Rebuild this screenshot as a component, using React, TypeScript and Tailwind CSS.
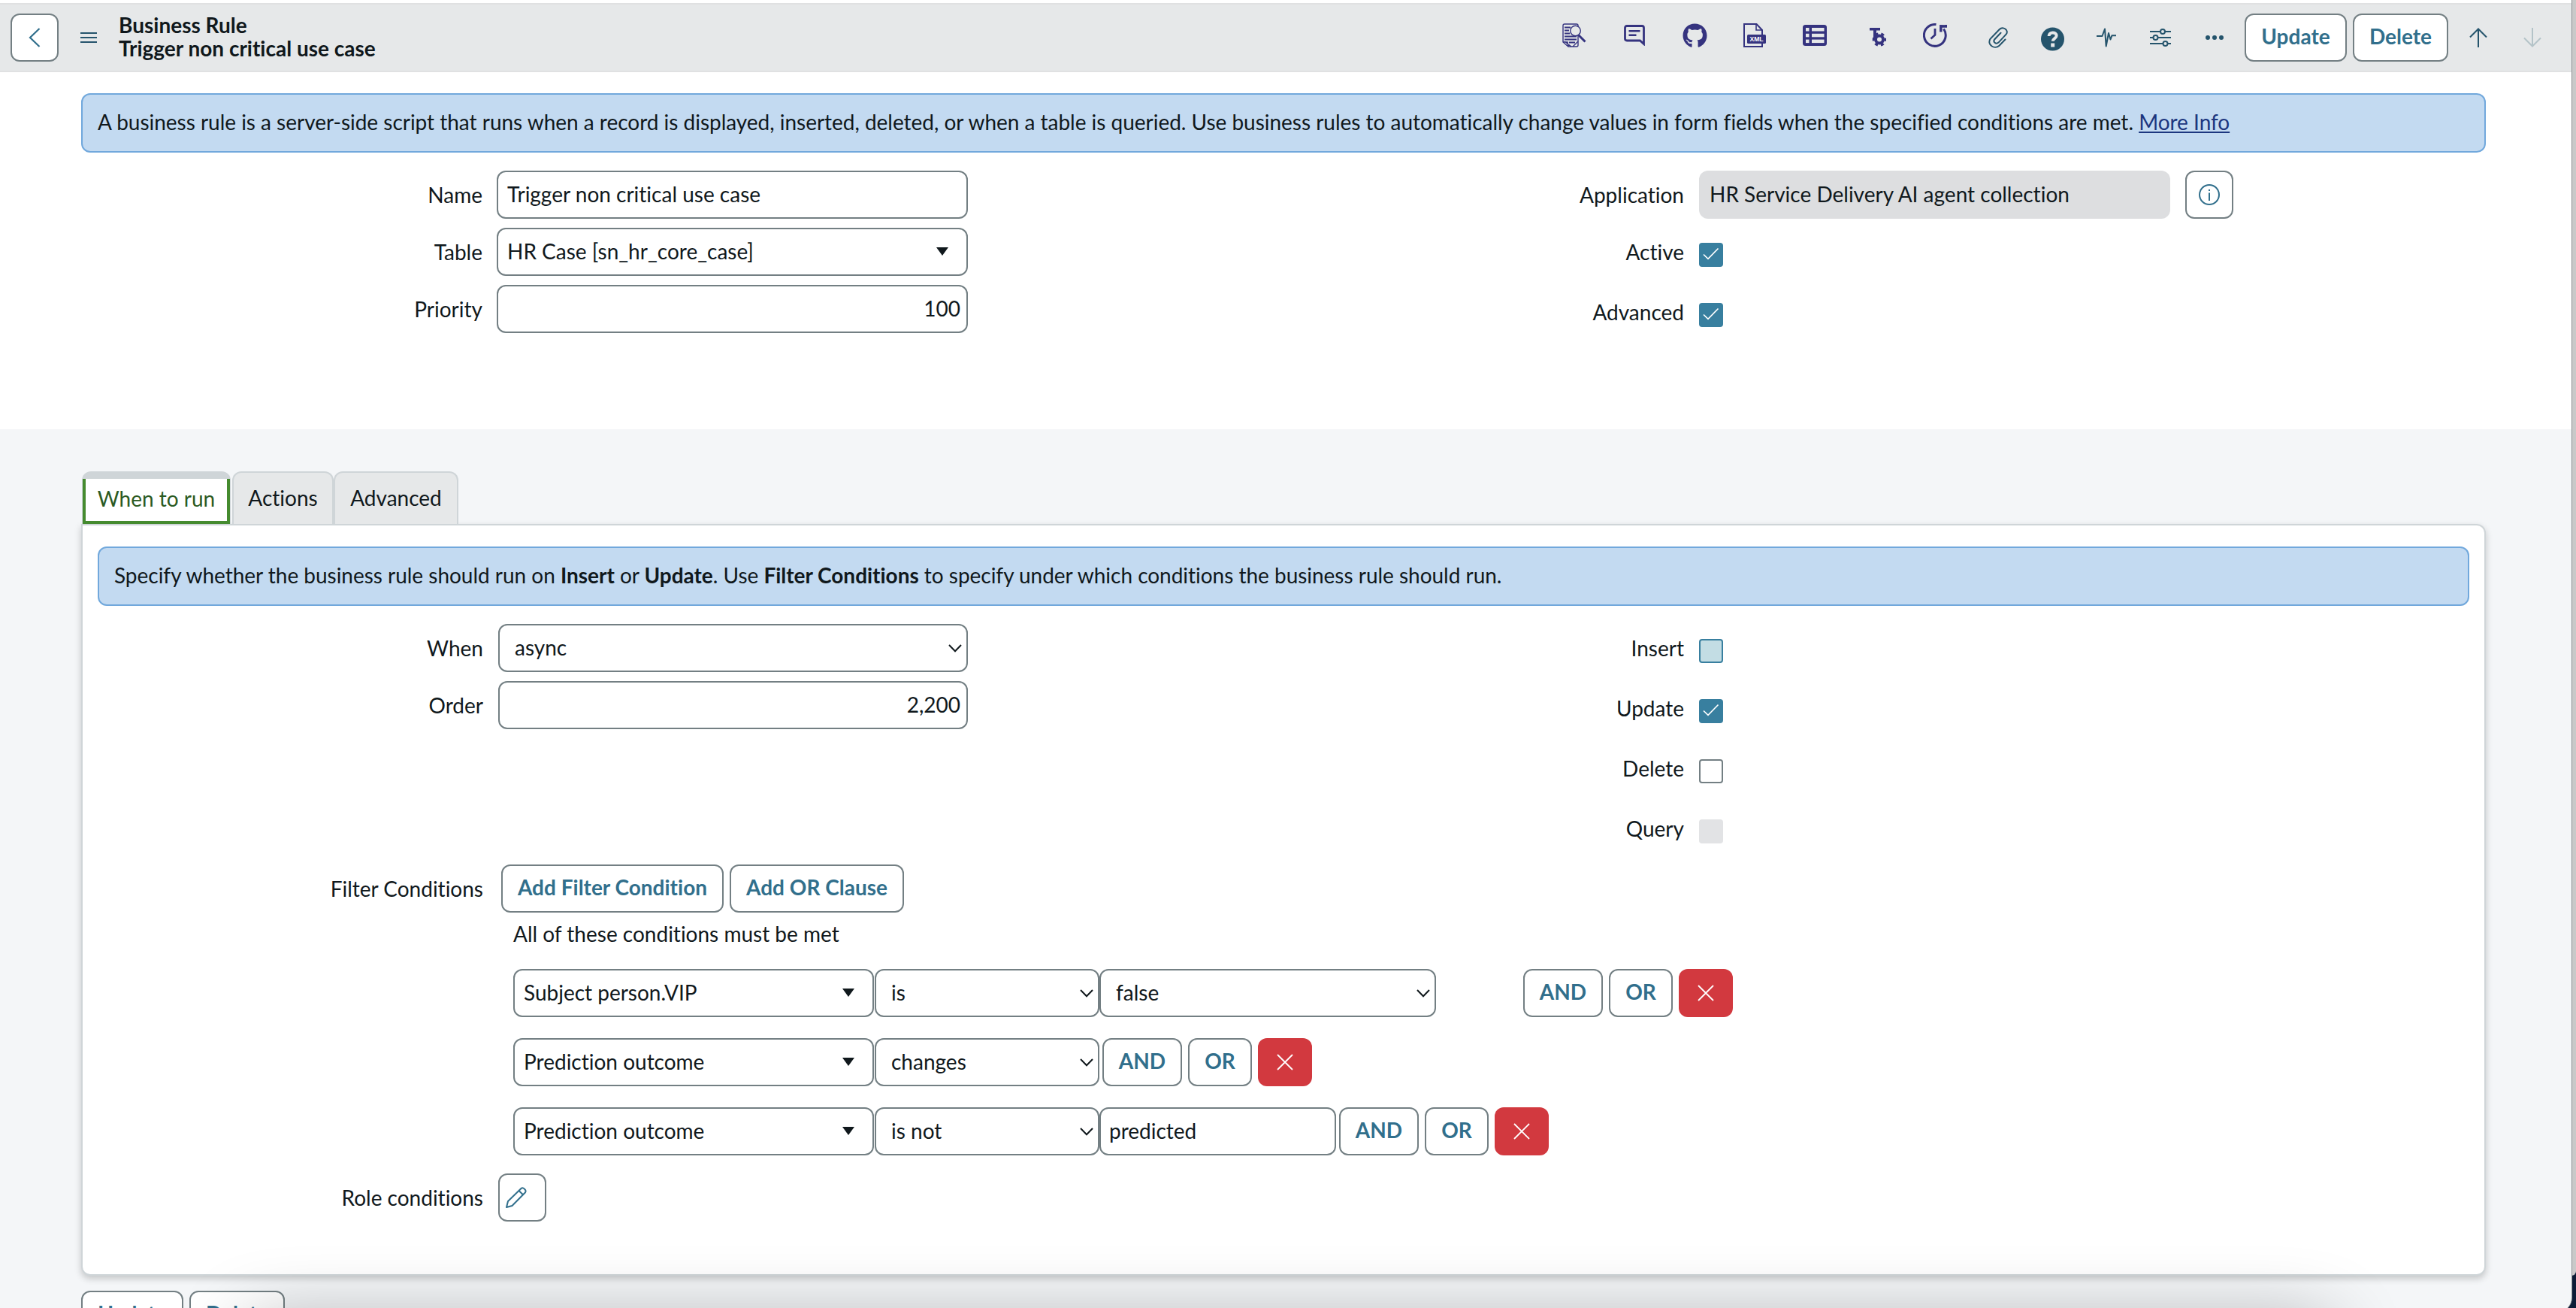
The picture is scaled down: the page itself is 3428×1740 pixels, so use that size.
import React from "react";
import { FaGithub } from "react-icons/fa";

const INK = "text-[#10181c]";

function Check({ state }: { state: "on" | "hover" | "off" | "disabled" }) {
  if (state === "on")
    return (
      <span className="mt-2 flex h-8 w-8 shrink-0 items-center justify-center rounded-[4px] bg-[#387f9f]">
        <svg width="32" height="32" viewBox="0 0 32 32" fill="none" stroke="#fff" strokeWidth="1.7">
          <path d="M6 15.5 L12 21.3 L25.5 7.5" />
        </svg>
      </span>
    );
  if (state === "hover")
    return <span className="mt-2 h-8 w-8 shrink-0 rounded-[4px] border-2 border-[#387f9f] bg-[#c3dde4]" />;
  if (state === "off")
    return <span className="mt-2 h-8 w-8 shrink-0 rounded-[4px] border-2 border-[#737f83] bg-white" />;
  return <span className="mt-2 h-8 w-8 shrink-0 rounded-[4px] bg-[#e2e3e5]" />;
}

function CheckRow({ label, state }: { label: string; state: "on" | "hover" | "off" | "disabled" }) {
  return (
    <div className="flex h-16 items-center gap-5">
      <span className="w-[400px] text-right">{label}</span>
      <Check state={state} />
    </div>
  );
}

function Btn({ children, className = "" }: { children: React.ReactNode; className?: string }) {
  return (
    <button
      className={
        "flex h-16 shrink-0 items-center justify-center whitespace-nowrap rounded-[12px] border-2 border-[#737f83] bg-white pb-[4px] font-bold text-[#316f8c] " +
        className
      }
    >
      {children}
    </button>
  );
}

function Triangle() {
  return (
    <svg width="16" height="11" viewBox="0 0 16 11" className="mt-px shrink-0 fill-[#10181c]">
      <path d="M0 0 H16 L8 11 Z" />
    </svg>
  );
}

function Chevron() {
  return (
    <svg width="18" height="11" viewBox="0 0 18 11" fill="none" stroke="#10181c" strokeWidth="2" className="mt-[3px] shrink-0">
      <path d="M1 1 L9 9.2 L17 1" />
    </svg>
  );
}

const BOX = "flex h-16 shrink-0 items-center rounded-[12px] border-2 border-[#737f83] bg-white pb-[3px]";

function Picker({ text, className }: { text: string; className: string }) {
  return (
    <div className={BOX + " justify-between pl-3 " + className}>
      <span>{text}</span>
      <Triangle />
    </div>
  );
}

function Select({ text, className }: { text: string; className: string }) {
  return (
    <div className={BOX + " justify-between pl-5 pr-[6px] " + className}>
      <span>{text}</span>
      <Chevron />
    </div>
  );
}

function Field({ label, labelClass, children }: { label: string; labelClass: string; children: React.ReactNode }) {
  return (
    <div className="flex items-center">
      <span className={"shrink-0 text-right " + labelClass}>{label}</span>
      {children}
    </div>
  );
}

function Clauses({ className }: { className: string }) {
  return (
    <div className={"flex gap-2 " + className}>
      <Btn className="w-[106px]">AND</Btn>
      <Btn className="w-[85px]">OR</Btn>
      <button className="flex h-16 w-[72px] items-center justify-center rounded-[12px] bg-[#d2393f]">
        <svg width="22" height="22" viewBox="0 0 22 22" fill="none" stroke="#fff" strokeWidth="1.8">
          <path d="M1 1 L21 21 M21 1 L1 21" />
        </svg>
      </button>
    </div>
  );
}

function InfoCircle() {
  return (
    <svg width="28" height="28" viewBox="0 0 28 28" fill="none" stroke="#316f8c" strokeWidth="2">
      <circle cx="14" cy="14" r="13" />
      <path d="M14 11.5 V22" />
      <path d="M14 7 V9" />
    </svg>
  );
}

function Header() {
  return (
    <header className="flex h-[92px] w-full items-center border-y-2 border-[#e0e1e2] bg-[#e6e8e9] pl-[14px]">
      <Btn className="w-16">
        <svg width="16" height="26" viewBox="0 0 16 26" fill="none" stroke="#316f8c" strokeWidth="2.2" className="mt-[4px]">
          <path d="M14.5 1 L2 13 L14.5 25" />
        </svg>
      </Btn>
      <svg width="22" height="16" viewBox="0 0 22 16" className="ml-[29px] fill-[#25546c]">
        <rect width="22" height="2" y="1" />
        <rect width="22" height="2" y="7" />
        <rect width="22" height="2" y="13" />
      </svg>
      <div className="ml-[29px] -mt-[3px] w-[1921px] font-bold leading-[31px]">
        <div>Business Rule</div>
        <div>Trigger non critical use case</div>
      </div>

      {/* developer shortcuts */}
      <div className="-mt-[6px] flex items-center text-[#35337f]">
        <svg width="32" height="32" viewBox="0 0 32 32" fill="none" stroke="currentColor" strokeWidth="1.4">
          <path d="M21 4 V3 Q21 1 19 1 H3 Q1 1 1 3 V25 L8 31 H19 Q21 31 21 29 V17" />
          <path d="M1 25 L7 25 L8 31 M3 24 L12 31 M21 24 L14 31" />
          <path d="M3 5.5 H11 M3 9.5 H9 M3 13.5 H10 M3 17.5 H19 M3 21.5 H19 M9 25.5 H17" strokeWidth="1.8" />
          <circle cx="17.5" cy="10" r="6.8" />
          <path d="M21.5 15.5 L30.5 24.5" strokeWidth="3" />
        </svg>
        <svg width="28" height="28" viewBox="0 0 28 28" fill="none" stroke="currentColor" strokeWidth="2.8" className="ml-[50px]">
          <path d="M4 1.5 H24 Q26.5 1.5 26.5 4 V25.5 L21.5 21 H4 Q1.5 21 1.5 18.5 V4 Q1.5 1.5 4 1.5 Z" />
          <path d="M6.5 8.3 H21.5 M6.5 13.8 H16.5" strokeWidth="2.4" />
        </svg>
        <FaGithub size={33} className="-mr-px ml-[50px]" />
        <svg width="30" height="32" viewBox="0 0 30 32" fill="none" stroke="currentColor" strokeWidth="2" className="ml-[49px]">
          <path d="M25 15 V9 L17.5 1 H1 V31 H25 V27" />
          <path d="M17 1 V9 H25" strokeWidth="1.6" />
          <rect x="5" y="15" width="25" height="12" rx="1.5" fill="currentColor" stroke="none" />
          <text x="17.5" y="24.2" textAnchor="middle" fontSize="8.6" fontWeight="700" fill="#fff" stroke="none" fontFamily="Liberation Sans, sans-serif">
            XML
          </text>
        </svg>
        <svg width="32" height="28" viewBox="0 0 32 28" className="ml-[49px]">
          <rect width="32" height="28" rx="3.5" fill="currentColor" />
          <g fill="#e6e8e9">
            <rect x="4" y="4" width="4.5" height="4.5" />
            <rect x="12" y="4" width="16.5" height="4.5" />
            <rect x="4" y="11.8" width="4.5" height="4.5" />
            <rect x="12" y="11.8" width="16.5" height="4.5" />
            <rect x="4" y="19.6" width="4.5" height="4.5" />
            <rect x="12" y="19.6" width="16.5" height="4.5" />
          </g>
        </svg>
        <svg width="22" height="26" viewBox="0 0 22 26" className="ml-[57px] mt-[3px]">
          <path d="M0 1 H14 V4.5 H9 V15 H5 V4.5 H0 Z" fill="currentColor" />
          <circle cx="13" cy="16.5" r="5" fill="none" stroke="currentColor" strokeWidth="4" />
          <circle cx="13" cy="16.5" r="7.8" fill="none" stroke="currentColor" strokeWidth="3" strokeDasharray="4.1 4.07" strokeDashoffset="2" />
        </svg>
        <svg width="32" height="32" viewBox="0 0 32 32" fill="none" stroke="currentColor" strokeWidth="3" className="ml-[49px]">
          <path d="M17.5 1.6 A14.4 14.4 0 1 0 27.5 7.5" />
          <path d="M31 2 V4 L23.8 3.8 V11.5" strokeWidth="3.4" />
          <path d="M16 7 V15.5 L10.5 20.5" strokeWidth="2.8" />
        </svg>
      </div>

      {/* record tools */}
      <div className="ml-[55px] flex items-center text-[#25546c]">
        <svg width="26" height="28" viewBox="0 0 26 28" fill="none" stroke="currentColor" strokeWidth="2" strokeLinecap="round">
          <path d="M22.5 16.5 L14.5 24.7 C8 30.5 -2 23.5 2.5 15.8 L14.8 3 C19.5 -1.5 27.5 4 23.8 9.5 L13.5 20.6 C10 23.5 5.5 19.8 8.4 16.2 L16.5 7.8" />
        </svg>
        <svg width="31" height="32" viewBox="0 0 31 32" className="ml-[44px] mt-1">
          <circle cx="15.5" cy="16" r="15.5" fill="currentColor" />
          <path d="M10.6 12 C10.6 6 20.6 6 20.6 11.4 C20.6 15.2 15.8 15 15.8 18.8" fill="none" stroke="#e6e8e9" strokeWidth="4" />
          <rect x="13.2" y="21.5" width="5" height="5" fill="#e6e8e9" />
        </svg>
        <svg width="26" height="26" viewBox="0 0 26 26" fill="none" stroke="currentColor" strokeWidth="2" strokeLinejoin="round" className="ml-[43px]">
          <path d="M0 11 H7.5 L11 1.5 L12.7 24.5 L16 7 L18.5 15.5 L20.5 10.2 H26" />
        </svg>
        <svg width="28" height="24" viewBox="0 0 28 24" fill="none" stroke="currentColor" strokeWidth="2" className="ml-[45px]">
          <path d="M0 4 H14 M20 4 H28 M0 12 H4.5 M10.5 12 H28 M0 20 H17.5 M23.5 20 H28" />
          <circle cx="17" cy="4" r="3" />
          <circle cx="7.5" cy="12" r="3" />
          <circle cx="20.5" cy="20" r="3" />
        </svg>
        <svg width="24" height="6" viewBox="0 0 24 6" className="ml-[46px] fill-[#25546c]">
          <circle cx="3" cy="3" r="3" />
          <circle cx="12" cy="3" r="3" />
          <circle cx="21" cy="3" r="3" />
        </svg>
      </div>

      <Btn className="ml-7 w-[136px]">Update</Btn>
      <Btn className="ml-2 w-[127px]">Delete</Btn>
      <svg width="24" height="26" viewBox="0 0 24 26" fill="none" stroke="#25546c" strokeWidth="2" className="ml-7 shrink-0">
        <path d="M12 26 V1.5 M1 12.5 L12 1.5 L23 12.5" />
      </svg>
      <svg width="24" height="26" viewBox="0 0 24 26" fill="none" stroke="#b4c3c8" strokeWidth="2" className="ml-12 shrink-0">
        <path d="M12 0 V24.5 M1 13.5 L12 24.5 L23 13.5" />
      </svg>
    </header>
  );
}

function InfoBar({ children }: { children: React.ReactNode }) {
  return (
    <div className="flex h-[79px] items-center rounded-[12px] border-2 border-[#71a8dc] bg-[#c3daf1] pb-[3px] pl-5 tracking-[-0.023px]">
      <p>{children}</p>
    </div>
  );
}

function Tabs() {
  return (
    <div className="flex h-[70px]">
      <div className="ml-px flex w-[198px] flex-col overflow-hidden rounded-t-[12px] bg-[#cfd5d8]">
        <div className="mx-px mt-[10px] flex flex-1 items-center justify-center border-4 border-t-0 border-[#458b2f] bg-white text-[#2b5a22]">
          <span className="-mt-[5px]">When to run</span>
        </div>
      </div>
      <div className="ml-[2px] flex w-[135px] items-center justify-center rounded-t-[12px] border-2 border-b-0 border-[#cfd5d8] bg-[#e6e8e9] pb-[2px]">
        Actions
      </div>
      <div className="flex w-[166px] items-center justify-center rounded-t-[12px] border-2 border-b-0 border-[#cfd5d8] bg-[#e6e8e9] pb-[2px]">
        Advanced
      </div>
    </div>
  );
}

export default function App() {
  return (
    <div
      className={
        "relative flex h-[1740px] w-[3428px] overflow-hidden bg-[#0c1c36] font-['Lato',sans-serif] text-[28px] leading-[34px] [font-variant-ligatures:none] " +
        INK
      }
    >
      {/* strip of the window behind */}
      <div className="absolute right-0 top-0 h-[1697px] w-8 rounded-br-[6px] bg-[#c9c9c9]" />

      <main className="relative flex h-[1746px] w-[3423px] shrink-0 flex-col overflow-hidden rounded-br-[20px] border-r border-[#8f9294] bg-[#f4f6f8]">
        <div className="h-[571px] shrink-0 bg-white pt-1">
          <Header />
          <div className="pl-[108px] pr-[114px] pt-7">
            <InfoBar>
              A business rule is a server-side script that runs when a record is displayed, inserted, deleted, or when a
              table is queried. Use business rules to automatically change values in form fields when the specified
              conditions are met. <a className="text-[#1b367f] underline decoration-2 underline-offset-2">More Info</a>
            </InfoBar>
          </div>
          <div className="mt-6 flex">
            <div className="flex w-[1841px] flex-col gap-3">
              <Field label="Name" labelClass="w-[642px] mr-[19px]">
                <div className={BOX + " w-[627px] pl-3"}>Trigger non critical use case</div>
              </Field>
              <Field label="Table" labelClass="w-[642px] mr-[19px]">
                <Picker text="HR Case [sn_hr_core_case]" className="w-[627px] pr-6" />
              </Field>
              <Field label="Priority" labelClass="w-[642px] mr-[19px]">
                <div className={BOX + " w-[627px] justify-end pr-2"}>100</div>
              </Field>
            </div>
            <div className="flex flex-col">
              <div className="flex items-center">
                <span className="mr-5 w-[400px] text-right">Application</span>
                <div className="flex h-16 w-[627px] items-center rounded-[12px] bg-[#dddee0] pb-[3px] pl-[14px]">
                  HR Service Delivery AI agent collection
                </div>
                <Btn className="ml-5 w-16 pt-[4px]">
                  <InfoCircle />
                </Btn>
              </div>
              <div className="mt-3 flex flex-col gap-4">
                <CheckRow label="Active" state="on" />
                <CheckRow label="Advanced" state="on" />
              </div>
            </div>
          </div>
        </div>

        <div className="mt-14 pl-[108px] pr-[114px]">
          <Tabs />
          <section className="h-[1000px] rounded-b-[12px] rounded-tr-[12px] border-2 border-[#cfd5d8] bg-white pt-7 shadow-[0_4px_10px_rgba(0,0,0,0.2)]">
            <div className="px-5">
              <InfoBar>
                Specify whether the business rule should run on <b>Insert</b> or <b>Update</b>. Use{" "}
                <b>Filter Conditions</b> to specify under which conditions the business rule should run.
              </InfoBar>
            </div>

            <div className="mt-6 flex">
              <div className="flex w-[1731px] flex-col gap-3">
                <Field label="When" labelClass="w-[533px] mr-5">
                  <Select text="async" className="w-[625px]" />
                </Field>
                <Field label="Order" labelClass="w-[533px] mr-5">
                  <div className={BOX + " w-[625px] justify-end pr-2"}>2,200</div>
                </Field>
              </div>
              <div className="flex flex-col gap-4">
                <CheckRow label="Insert" state="hover" />
                <CheckRow label="Update" state="on" />
                <CheckRow label="Delete" state="off" />
                <CheckRow label="Query" state="disabled" />
              </div>
            </div>

            <div className="mt-4 flex items-center">
              <span className="mr-6 w-[533px] text-right">Filter Conditions</span>
              <Btn className="w-[296px]">Add Filter Condition</Btn>
              <Btn className="ml-2 w-[232px]">Add OR Clause</Btn>
            </div>

            <div className="ml-[573px] mt-[11px]">
              <p>All of these conditions must be met</p>
              <div className="mt-[30px] flex flex-col gap-7">
                <div className="flex">
                  <Picker text="Subject person.VIP" className="w-[480px] pr-6" />
                  <Select text="is" className="ml-px w-[299px]" />
                  <Select text="false" className="w-[448px]" />
                  <Clauses className="ml-[116px]" />
                </div>
                <div className="flex">
                  <Picker text="Prediction outcome" className="w-[480px] pr-6" />
                  <Select text="changes" className="ml-px w-[299px]" />
                  <Clauses className="ml-1" />
                </div>
                <div className="flex">
                  <Picker text="Prediction outcome" className="w-[480px] pr-6" />
                  <Select text="is not" className="ml-px w-[299px]" />
                  <div className={BOX + " w-[315px] pl-[11px]"}>predicted</div>
                  <Clauses className="ml-1" />
                </div>
              </div>
            </div>

            <div className="mt-6 flex items-center">
              <span className="mr-5 w-[533px] text-right">Role conditions</span>
              <button className="flex h-16 w-16 items-center rounded-[12px] border-2 border-[#737f83] bg-white pl-2">
                <svg width="28" height="28" viewBox="0 0 28 28" fill="none" stroke="#316f8c" strokeWidth="2" strokeLinejoin="round">
                  <path d="M1 27 L3 19 L20.5 2 C23 -0.3 28.3 4.5 25.8 7.5 L8.5 25 Z" />
                  <path d="M17.5 5 L23 10.2" />
                </svg>
              </button>
            </div>
          </section>
          <div className="mt-5 flex">
            <Btn className="w-[136px]">Update</Btn>
            <Btn className="ml-2 w-[127px]">Delete</Btn>
          </div>
        </div>
        {/* soft shadow cast by a floating bar under the viewport */}
        <div className="absolute left-[330px] top-[1762px] h-40 w-[2770px] shadow-[0_0_100px_rgba(0,0,0,0.32)]" />
      </main>
    </div>
  );
}
